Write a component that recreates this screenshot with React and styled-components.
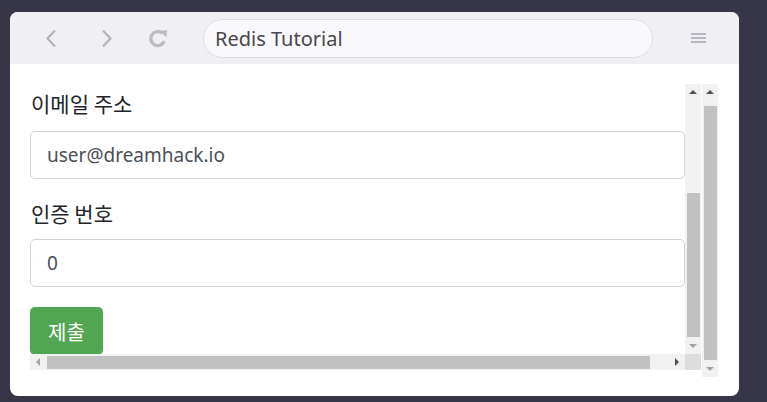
import React from 'react';
import styled, { createGlobalStyle } from 'styled-components';

const GlobalStyle = createGlobalStyle`
  html, body {
    margin: 0;
    padding: 0;
    background: #373548;
    height: 100%;
  }
  body {
    font-family: "Noto Sans", "Noto Sans CJK KR", sans-serif;
  }
`;

const Page = styled.div`
  width: 767px;
  height: 402px;
  padding: 12px 0 0 10px;
  box-sizing: border-box;
`;

const Window = styled.div`
  width: 729px;
  height: 384px;
  background: #fff;
  border-radius: 8px;
  overflow: hidden;
  display: flex;
  flex-direction: column;
`;

const Toolbar = styled.div`
  height: 52px;
  background: #f0f0f4;
  display: flex;
  align-items: center;
  padding-left: 35px;
  box-sizing: border-box;
`;

const NavButton = styled.div`
  width: ${p => p.w || 20}px;
  height: 20px;
  margin-right: ${p => p.gap || 0}px;
  display: flex;
  align-items: center;
  justify-content: center;
  color: #b3b2b9;
`;

const AddressBar = styled.div`
  width: 450px;
  height: 39px;
  box-sizing: border-box;
  border: 1px solid #dedde3;
  border-radius: 20px;
  background: #f9f9fb;
  display: flex;
  align-items: center;
  padding-left: 11px;
  font-size: 20px;
  color: #48464f;
  margin-left: 35px;
`;

const Menu = styled.div`
  margin-left: 38px;
  width: 15px;
  display: flex;
  flex-direction: column;
  gap: 2px;
  & span {
    height: 2px;
    background: #b8b7c0;
  }
`;

const Body = styled.div`
  flex: 1;
  display: flex;
  padding: 20px 0 0 20px;
  gap: 1px;
`;

const Frame = styled.div`
  width: 671px;
  height: 286px;
  display: grid;
  grid-template-columns: 655px 16px;
  grid-template-rows: 270px 16px;
`;

const Content = styled.div`
  overflow: hidden;
  padding-top: 4px;
`;

const Label = styled.div`
  font-family: "Noto Sans CJK KR", sans-serif;
  font-size: 21px;
  line-height: 30px;
  color: #212529;
  padding-left: 1px;
  margin-bottom: ${p => p.mb}px;
`;

const Input = styled.div`
  height: 48px;
  box-sizing: border-box;
  border: 1px solid #ced4da;
  border-radius: 5px;
  display: flex;
  align-items: center;
  padding-left: 16px;
  font-family: "Noto Sans", sans-serif;
  font-size: 19px;
  color: #495057;
  margin-bottom: ${p => p.mb}px;
`;

const SubmitButton = styled.div`
  display: inline-flex;
  align-items: center;
  justify-content: center;
  width: 73px;
  height: 48px;
  border-radius: 5px;
  background: #52a652;
  color: #fff;
  font-family: "Noto Sans CJK KR", sans-serif;
  font-size: 20px;
`;

const VScroll = styled.div`
  width: 16px;
  height: ${p => p.h}px;
  background: #f1f1f1;
  display: flex;
  flex-direction: column;
`;

const HScroll = styled.div`
  height: 16px;
  background: #f1f1f1;
  display: flex;
`;

const ArrowBox = styled.div`
  width: 16px;
  height: 16px;
  flex: none;
  display: flex;
  align-items: center;
  justify-content: center;
`;

const Tri = styled.div`
  width: 0;
  height: 0;
  ${p => p.dir === 'up' && `
    border-left: 4px solid transparent;
    border-right: 4px solid transparent;
    border-bottom: 4px solid ${p.c};
  `}
  ${p => p.dir === 'down' && `
    border-left: 4px solid transparent;
    border-right: 4px solid transparent;
    border-top: 4px solid ${p.c};
  `}
  ${p => p.dir === 'left' && `
    border-top: 4px solid transparent;
    border-bottom: 4px solid transparent;
    border-right: 4px solid ${p.c};
  `}
  ${p => p.dir === 'right' && `
    border-top: 4px solid transparent;
    border-bottom: 4px solid transparent;
    border-left: 4px solid ${p.c};
  `}
`;

const VTrack = styled.div`
  flex: 1;
  display: flex;
  flex-direction: column;
  align-items: center;
`;

const VThumb = styled.div`
  width: 13px;
  margin-top: ${p => p.top}px;
  height: ${p => p.len}px;
  background: #c1c1c1;
`;

const HTrack = styled.div`
  flex: 1;
  display: flex;
  align-items: center;
`;

const HThumb = styled.div`
  height: 13px;
  margin-left: ${p => p.left}px;
  width: ${p => p.len}px;
  background: #c1c1c1;
`;

const Corner = styled.div`
  background: #dcdcdc;
`;

const DARK = '#505050';
const LIGHT = '#a3a3a3';

const Back = () => (
  <svg width="12" height="19" viewBox="0 0 12 19">
    <polyline points="10,1.5 2.5,9.5 10,17.5" fill="none" stroke="currentColor" strokeWidth="2.2" />
  </svg>
);

const Forward = () => (
  <svg width="12" height="19" viewBox="0 0 12 19">
    <polyline points="2,1.5 9.5,9.5 2,17.5" fill="none" stroke="currentColor" strokeWidth="2.2" />
  </svg>
);

const Reload = () => (
  <svg width="20" height="19" viewBox="0 0 20 19">
    <path d="M16.3 12.2 A7 7 0 1 1 14.3 4.2" fill="none" stroke="#bdbcc3" strokeWidth="3.4" />
    <polygon points="11.5,2 19,1 18.5,8.5" fill="#bdbcc3" />
  </svg>
);

export default function App() {
  return (
    <>
      <GlobalStyle />
      <Page>
        <Window>
          <Toolbar>
            <NavButton w={12} gap={44}><Back /></NavButton>
            <NavButton w={12} gap={35}><Forward /></NavButton>
            <NavButton w={20}><Reload /></NavButton>
            <AddressBar>Redis Tutorial</AddressBar>
            <Menu><span /><span /><span /></Menu>
          </Toolbar>
          <Body>
            <Frame>
              <Content>
                <Label mb={13}>이메일 주소</Label>
                <Input mb={19}>user@dreamhack.io</Input>
                <Label mb={11}>인증 번호</Label>
                <Input mb={20}>0</Input>
                <SubmitButton>제출</SubmitButton>
              </Content>
              <VScroll h={270}>
                <ArrowBox><Tri dir="up" c={DARK} /></ArrowBox>
                <VTrack><VThumb top={93} len={144} /></VTrack>
                <ArrowBox><Tri dir="down" c={LIGHT} /></ArrowBox>
              </VScroll>
              <HScroll>
                <ArrowBox><Tri dir="left" c={LIGHT} /></ArrowBox>
                <HTrack><HThumb left={1} len={603} /></HTrack>
                <ArrowBox><Tri dir="right" c={DARK} /></ArrowBox>
              </HScroll>
              <Corner />
            </Frame>
            <VScroll h={293}>
              <ArrowBox><Tri dir="up" c={DARK} /></ArrowBox>
              <VTrack><VThumb top={6} len={254} /></VTrack>
              <ArrowBox><Tri dir="down" c={LIGHT} /></ArrowBox>
            </VScroll>
          </Body>
        </Window>
      </Page>
    </>
  );
}
